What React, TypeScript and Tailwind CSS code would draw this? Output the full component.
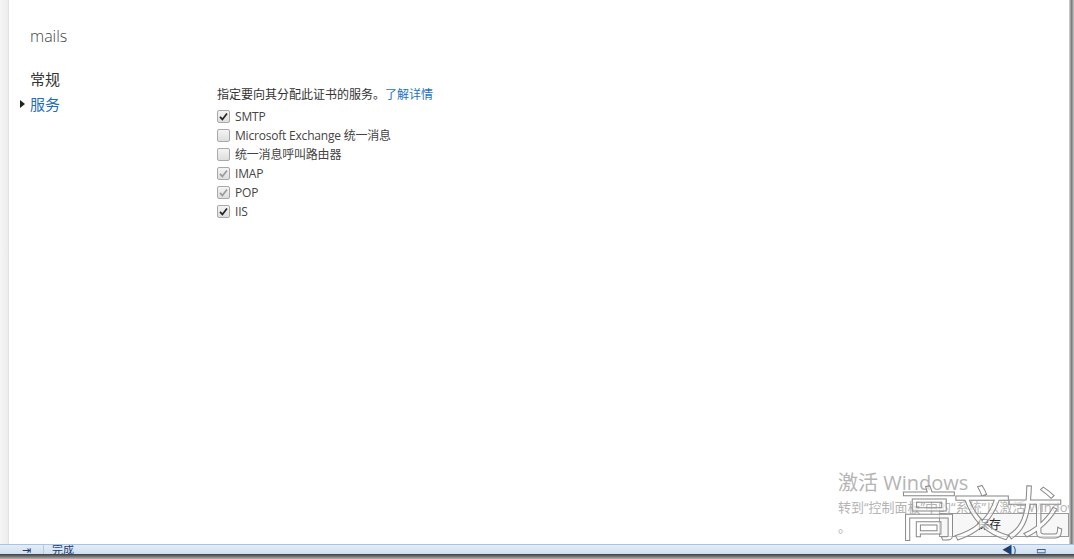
const FONT = "font-['Segoe_UI','Open_Sans','Noto_Sans','Noto_Sans_CJK_SC',sans-serif]";

type Svc = { label: string; checked: boolean; disabled?: boolean };

const services: Svc[] = [
  { label: 'SMTP', checked: true },
  { label: 'Microsoft Exchange 统一消息', checked: false },
  { label: '统一消息呼叫路由器', checked: false },
  { label: 'IMAP', checked: true, disabled: true },
  { label: 'POP', checked: true, disabled: true },
  { label: 'IIS', checked: true },
];

function Box({ checked, disabled }: { checked: boolean; disabled?: boolean }) {
  return (
    <span className="w-[13px] h-[13px] rounded-[2px] border border-[#a9a9a9] bg-gradient-to-b from-[#f4f4f4] to-[#dedede] flex items-center justify-center">
      {checked && (
        <svg width="9" height="9" viewBox="0 0 9 9">
          <path
            d="M1 4.8 L3.4 7.4 L8 1.4"
            fill="none"
            stroke={disabled ? '#9a9a9a' : '#222'}
            strokeWidth="1.7"
          />
        </svg>
      )}
    </span>
  );
}

export default function App() {
  return (
    <div className={`${FONT} relative w-[1074px] h-[559px] overflow-hidden bg-white flex flex-col`}>
      <div className="flex flex-1 min-h-0">
        {/* left frame edge */}
        <div className="w-[9px] bg-gradient-to-r from-[#f6f6f6] to-[#ececec] border-r border-[#e2e2e2]" />

        {/* nav column */}
        <div className="w-[198px] pt-[26px]">
          <div className="pl-[21px] text-[16px] font-light text-[#444] leading-[20px]">mails</div>
          <div className="mt-[23px] pl-[21px] text-[15px] text-[#333] leading-[20px]">常规</div>
          <div className="mt-[5px] flex items-center text-[15px] leading-[20px] text-[#1f6fb8]">
            <svg className="ml-[11px]" width="5" height="8" viewBox="0 0 5 8">
              <path d="M0 0 L5 4 L0 8 Z" fill="#222" />
            </svg>
            <span className="ml-[5px]">服务</span>
          </div>
        </div>

        {/* content */}
        <div className="flex-1 pt-[86px] pl-[10px]">
          <div className="text-[12px] leading-[18px] text-[#333]">
            指定要向其分配此证书的服务。<span className="text-[#1a73c6]">了解详情</span>
          </div>
          <div className="mt-[3px] flex flex-col">
            {services.map((s) => (
              <div key={s.label} className="h-[19px] flex items-center gap-[5px] text-[12px] tracking-[-0.2px] text-[#444]">
                <Box checked={s.checked} disabled={s.disabled} />
                <span>{s.label}</span>
              </div>
            ))}
          </div>
        </div>

        {/* right frame shadow */}
        <div className="relative z-10 w-[5px] bg-gradient-to-r from-[#d8d8d8] via-[#7d7d7d] to-[#c8c8c8]" />
      </div>

      {/* status bar */}
      <div className="h-[10px] flex items-start bg-gradient-to-b from-[#e4edf8] to-[#cfdff1] border-t border-[#a9c3e3] text-[11px] leading-[10px] text-[#1d3f6e] overflow-hidden">
        <div className="w-[44px] pl-[22px] border-r border-[#b8c9de] h-full overflow-hidden">⇥</div>
        <div className="pl-[8px]">完成</div>
        <div className="ml-auto pr-[28px] flex gap-[20px]">
          <span>◀)</span>
          <span>▭</span>
        </div>
      </div>
      <div className="h-[5px] bg-gradient-to-b from-[#3c3c3c] to-[#b5b5b5]" />

      {/* save button under watermark */}
      <div className="absolute left-[939px] top-[513px] w-[130px] h-[24px] border border-[#9a9a9a] bg-[#f7f7f7] text-[12px] text-[#222] flex items-center pl-[37px]">
        保存
      </div>

      {/* Windows activation watermark */}
      <div className="absolute left-[838px] top-[470px] text-[#b4b4b4] whitespace-nowrap pointer-events-none">
        <div className="text-[20px] leading-[26px]">激活 Windows</div>
        <div className="text-[13px] leading-[20px] mt-[1px]">转到“控制面板”中的“系统”以激活 Windows。</div>
        <div className="text-[13px] leading-[18px] mt-[1px]">。</div>
      </div>

      {/* name watermark */}
      <div className="absolute left-[900px] top-[486px] font-['Liberation_Serif','Noto_Sans_CJK_SC',serif] text-[58px] leading-[60px] tracking-[-5px] text-white/60 [-webkit-text-stroke:1px_#8a8a8a] pointer-events-none">
        高文龙
      </div>
    </div>
  );
}
